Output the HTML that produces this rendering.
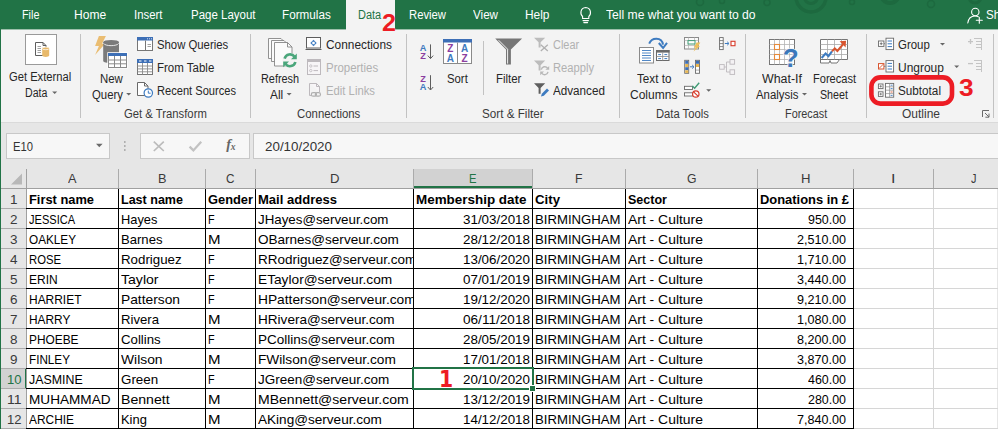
<!DOCTYPE html>
<html lang="en">
<head>
<meta charset="utf-8">
<title>Excel - Data - Subtotal</title>
<style>
html,body{margin:0;padding:0;}
body{width:998px;height:429px;overflow:hidden;position:relative;background:#e6e6e6;font-family:"Liberation Sans",Arial,sans-serif;}
#app{position:absolute;left:0;top:0;width:998px;height:429px;overflow:hidden;background:#e6e6e6;}
.abs{position:absolute;}
.t{position:absolute;white-space:pre;transform-origin:0 0;display:block;}
.clip{position:absolute;overflow:hidden;}
#tabbar{left:0;top:0;width:998px;height:29px;background:#217346;}
#tabactive{left:346px;top:0;width:49px;height:29px;background:#f3f3f3;}
#ribbon{left:0;top:29px;width:998px;height:93px;background:#f3f3f3;}
#ribline{left:0;top:122px;width:998px;height:1px;background:#dadada;}
#leftedge{left:0;top:0;width:1px;height:429px;background:#217346;}
.sep{position:absolute;width:1px;background:#c2c2c2;top:34px;height:84px;}
.box{position:absolute;box-sizing:border-box;border:1px solid #c8c8c8;background:#f7f7f7;}
#grid{left:1px;top:169px;width:996px;height:260px;background:#fff;}
#colhdr{left:1px;top:169px;width:996px;height:19px;background:#e6e6e6;}
#rowhdr{left:1px;top:169px;width:25px;height:260px;background:#e6e6e6;}
.hsep{position:absolute;top:169px;width:1px;height:19px;background:#ababab;}
.vl{position:absolute;width:1px;background:#000;}
.hl{position:absolute;height:1px;background:#000;}
.gl{position:absolute;background:#d6d6d6;}
svg{position:absolute;overflow:visible;}
</style>
</head>
<body>
<div id="app">
<div class="abs" id="tabbar"></div>
<svg width="998" height="29" viewBox="0 0 998 29" style="left:0;top:0">
<g fill="none" stroke="#1d693f" stroke-width="3.5">
<circle cx="811" cy="-3" r="15"/>
<circle cx="811" cy="-3" r="6.5" stroke-width="3"/>
<circle cx="890" cy="-6" r="9" stroke-width="4"/>
<circle cx="975" cy="-3" r="6" stroke-width="3"/>
</g>
<g fill="none" stroke="#1d693f" stroke-width="1.5">
<circle cx="700" cy="2" r="3.5"/>
<circle cx="722" cy="1" r="2.5"/>
<circle cx="767" cy="2.5" r="3"/>
<circle cx="852" cy="2" r="2.5"/>
<circle cx="931" cy="4" r="3.5"/>
</g>
</svg>
<div class="abs" id="tabactive"></div>
<div class="abs" id="ribbon"></div>
<div class="abs" id="ribline"></div>
<div class="abs" style="left:0;top:29px;width:346px;height:1px;background:#9dbfab"></div>
<div class="abs" style="left:395px;top:29px;width:603px;height:1px;background:#9dbfab"></div>

<!-- group separators -->
<div class="sep" style="left:80px"></div>
<div class="sep" style="left:250px"></div>
<div class="sep" style="left:406px"></div>
<div class="sep" style="left:483px;top:41px;height:54px"></div>
<div class="sep" style="left:619px"></div>
<div class="sep" style="left:745px"></div>
<div class="sep" style="left:866px"></div>
<div class="sep" style="left:993px"></div>

<!-- formula bar -->
<div class="box" style="left:6px;top:133px;width:104px;height:26px"></div>
<div class="box" style="left:140px;top:133px;width:110px;height:26px"></div>
<div class="box" style="left:253px;top:133px;width:760px;height:26px"></div>

<!-- grid -->
<div class="abs" id="grid"></div>
<div class="abs" id="colhdr"></div>
<div class="abs" id="rowhdr"></div>
<!-- selected column header E and row header 10 -->
<div class="abs" style="left:414px;top:169px;width:118px;height:18px;background:#d2d2d2"></div>
<div class="abs" style="left:414px;top:186px;width:118px;height:2px;background:#217346"></div>
<div class="abs" style="left:1px;top:369px;width:25px;height:19px;background:#d2d2d2"></div>
<div class="abs" style="left:25px;top:369px;width:2px;height:19px;background:#217346"></div>
<div class="hsep" style="left:26px"></div>
<div class="hsep" style="left:118px"></div>
<div class="hsep" style="left:205px"></div>
<div class="hsep" style="left:255px"></div>
<div class="hsep" style="left:413px"></div>
<div class="hsep" style="left:532px"></div>
<div class="hsep" style="left:625px"></div>
<div class="hsep" style="left:757px"></div>
<div class="hsep" style="left:853px"></div>
<div class="hsep" style="left:933px"></div>
<div class="gl" style="left:1px;top:188px;width:25px;height:1px;background:#ababab"></div>
<div class="gl" style="left:1px;top:208px;width:25px;height:1px;background:#ababab"></div>
<div class="gl" style="left:1px;top:228px;width:25px;height:1px;background:#ababab"></div>
<div class="gl" style="left:1px;top:248px;width:25px;height:1px;background:#ababab"></div>
<div class="gl" style="left:1px;top:268px;width:25px;height:1px;background:#ababab"></div>
<div class="gl" style="left:1px;top:288px;width:25px;height:1px;background:#ababab"></div>
<div class="gl" style="left:1px;top:308px;width:25px;height:1px;background:#ababab"></div>
<div class="gl" style="left:1px;top:328px;width:25px;height:1px;background:#ababab"></div>
<div class="gl" style="left:1px;top:348px;width:25px;height:1px;background:#ababab"></div>
<div class="gl" style="left:1px;top:368px;width:25px;height:1px;background:#ababab"></div>
<div class="gl" style="left:1px;top:388px;width:25px;height:1px;background:#ababab"></div>
<div class="gl" style="left:1px;top:408px;width:25px;height:1px;background:#ababab"></div>
<div class="gl" style="left:1px;top:428px;width:25px;height:1px;background:#ababab"></div>
<div class="gl" style="left:854px;top:188px;width:144px;height:1px"></div>
<div class="gl" style="left:854px;top:208px;width:144px;height:1px"></div>
<div class="gl" style="left:854px;top:228px;width:144px;height:1px"></div>
<div class="gl" style="left:854px;top:248px;width:144px;height:1px"></div>
<div class="gl" style="left:854px;top:268px;width:144px;height:1px"></div>
<div class="gl" style="left:854px;top:288px;width:144px;height:1px"></div>
<div class="gl" style="left:854px;top:308px;width:144px;height:1px"></div>
<div class="gl" style="left:854px;top:328px;width:144px;height:1px"></div>
<div class="gl" style="left:854px;top:348px;width:144px;height:1px"></div>
<div class="gl" style="left:854px;top:368px;width:144px;height:1px"></div>
<div class="gl" style="left:854px;top:388px;width:144px;height:1px"></div>
<div class="gl" style="left:854px;top:408px;width:144px;height:1px"></div>
<div class="gl" style="left:854px;top:428px;width:144px;height:1px"></div>
<div class="gl" style="left:933px;top:189px;width:1px;height:240px"></div>
<div class="gl" style="left:854px;top:188px;width:144px;height:1px;background:#a0a0a0"></div>
<div class="vl" style="left:26px;top:169px;height:260px;background:#a0a0a0"></div>
<div class="vl" style="left:118px;top:188px;height:241px"></div>
<div class="vl" style="left:205px;top:188px;height:241px"></div>
<div class="vl" style="left:255px;top:188px;height:241px"></div>
<div class="vl" style="left:413px;top:188px;height:241px"></div>
<div class="vl" style="left:532px;top:188px;height:241px"></div>
<div class="vl" style="left:625px;top:188px;height:241px"></div>
<div class="vl" style="left:757px;top:188px;height:241px"></div>
<div class="vl" style="left:853px;top:188px;height:241px"></div>
<div class="hl" style="left:1px;top:188px;width:853px;background:#a0a0a0"></div>
<div class="hl" style="left:26px;top:208px;width:828px"></div>
<div class="hl" style="left:26px;top:228px;width:828px"></div>
<div class="hl" style="left:26px;top:248px;width:828px"></div>
<div class="hl" style="left:26px;top:268px;width:828px"></div>
<div class="hl" style="left:26px;top:288px;width:828px"></div>
<div class="hl" style="left:26px;top:308px;width:828px"></div>
<div class="hl" style="left:26px;top:328px;width:828px"></div>
<div class="hl" style="left:26px;top:348px;width:828px"></div>
<div class="hl" style="left:26px;top:368px;width:828px"></div>
<div class="hl" style="left:26px;top:388px;width:828px"></div>
<div class="hl" style="left:26px;top:408px;width:828px"></div>
<div class="hl" style="left:26px;top:428px;width:828px"></div>
<!-- selection -->
<div class="abs" style="left:412px;top:367px;width:122px;height:23px;box-sizing:border-box;border:2px solid #217346"></div>
<div class="abs" style="left:529px;top:385px;width:7px;height:7px;background:#fff"></div>
<div class="abs" style="left:530px;top:386px;width:5px;height:5px;background:#217346"></div>

<svg width="998" height="429" viewBox="0 0 998 429" style="left:0;top:0" font-family="Liberation Sans, Arial, sans-serif">
<!-- ===== Tab bar: bulb + share ===== -->
<g fill="none" stroke="#fff" stroke-width="1.1" stroke-linecap="round">
  <path d="M582.6 16.5 C580 14.5 580 8 585.7 7.5 C591.4 8 591.4 14.5 588.8 16.5 L588.8 18.5 L582.6 18.5 Z"/>
  <path d="M583 20.6 H588.4 M583.8 22.6 H587.6"/>
  <circle cx="975.3" cy="12" r="3.7"/>
  <path d="M967.8 23 C968.5 18 971.5 16 975 16 C976.3 16 977.4 16.3 978.3 16.8"/>
  <path d="M979.3 17.2 V23.2 M976.3 20.2 H982.3"/>
</g>

<!-- ===== Get External Data ===== -->
<rect x="25.5" y="34.5" width="31" height="30" fill="#fff" stroke="#9a9a9a"/>
<path d="M35.5 42.5 H43 L46 45.5 V55.5 H35.5 Z" fill="#fff" stroke="#5e5e5e"/>
<path d="M43 42.5 V45.5 H46" fill="none" stroke="#5e5e5e"/>
<path d="M37.5 46.5 H41 M37.5 48.5 H41 M37.5 50.5 H41 M37.5 52.5 H41" stroke="#8a8a8a" stroke-width="0.8"/>
<path d="M42.2 48.5 V55.6 C42.2 57.4 49.2 57.4 49.2 55.6 V48.5 Z" fill="#e8b96a"/>
<ellipse cx="45.7" cy="48.4" rx="3.5" ry="1.3" fill="#e8b96a" stroke="#fff" stroke-width="0.7"/>
<path d="M52.2 91.4 H57.2 L54.7 94 Z" fill="#666"/>

<!-- ===== New Query ===== -->
<polygon points="98.9,35.9 105.9,35.9 102,43.7 105,43.7 95.1,54.9 98.9,46 95.1,46" fill="#eabd72"/>
<path d="M103.2 42.3 V61 C103.2 63.6 119 63.6 119 61 V42.3 Z" fill="#7a7a7a"/>
<ellipse cx="111.1" cy="42.3" rx="7.9" ry="2.4" fill="#7a7a7a"/><path d="M103.6 43.4 C105 46.4 117.2 46.4 118.6 43.4" fill="none" stroke="#f3f3f3" stroke-width="0.9"/>
<rect x="107.3" y="52.2" width="20.4" height="16.3" fill="#fff"/>
<rect x="108.5" y="53.5" width="18" height="14" fill="#fff" stroke="#8a8a8a"/>
<rect x="108" y="53" width="19" height="3" fill="#3d6fb6"/>
<path d="M108.5 60 H126.5 M108.5 63.8 H126.5 M114.5 56 V67.5 M120.5 56 V67.5" stroke="#8a8a8a" fill="none"/>
<path d="M126.2 93 H131.2 L128.7 95.6 Z" fill="#666"/>

<!-- Show Queries -->
<rect x="137.5" y="37.5" width="15" height="13" fill="#fff" stroke="#767676"/>
<rect x="137" y="37" width="16" height="3.5" fill="#3d6fb6"/>
<path d="M145.5 40.5 V50.5" stroke="#767676"/>
<path d="M147.5 44.5 H151 M147.5 46.5 H151" stroke="#8a8a8a" stroke-width="0.8"/>
<path d="M147 38.8 H148 M149 38.8 H150 M151 38.8 H152" stroke="#fff" stroke-width="0.8"/>
<!-- From Table -->
<rect x="137.5" y="59.5" width="15" height="15" fill="#fff" stroke="#767676"/>
<rect x="137" y="59" width="16" height="4" fill="#3d6fb6"/>
<path d="M139 61 H141.5 M144 61 H146.5 M149 61 H151.5" stroke="#fff" stroke-width="1"/>
<path d="M137.5 66 H152.5 M137.5 68.9 H152.5 M137.5 71.8 H152.5 M142.5 63 V74.5 M147.5 63 V74.5" stroke="#8a8a8a" stroke-width="0.9" fill="none"/>
<!-- Recent Sources -->
<path d="M137.5 82.5 H144.5 L148 86 V95.5 H137.5 Z" fill="#fff" stroke="#6a6a6a"/>
<path d="M144.5 82.5 V86 H148" fill="none" stroke="#6a6a6a"/>
<circle cx="148.3" cy="93" r="4.2" fill="#fff" stroke="#3d7bc0" stroke-width="1.2"/>
<path d="M148.3 90.6 V93.2 H150.6" fill="none" stroke="#3d7bc0" stroke-width="1"/>

<!-- ===== Refresh All ===== -->
<g fill="#fbfbfb" stroke="#868686" stroke-width="0.9">
<path d="M268.5 38.5 H281 L285.5 43 V58.5 H268.5 Z"/>
<path d="M271.5 40.5 H284 L288.5 45 V61.5 H271.5 Z"/>
<path d="M274.5 42.5 H287.5 L292 47 V66 H274.5 Z"/>
<path d="M287.5 42.5 V47 H292" fill="none"/>
</g>
<circle cx="290" cy="60.3" r="7.6" fill="#f3f3f3"/>
<g fill="none" stroke="#4aa67b" stroke-width="2.6">
<path d="M284.6 58.6 A5.6 5.6 0 0 1 294.6 56.8"/>
<path d="M295.4 62 A5.6 5.6 0 0 1 285.4 63.8"/>
</g>
<path d="M296.8 53.4 V59.2 H291 Z" fill="#4aa67b"/>
<path d="M283.2 67.2 V61.4 H289 Z" fill="#4aa67b"/>
<path d="M286.6 93 H291.6 L289.1 95.6 Z" fill="#666"/>

<!-- Connections -->
<rect x="306.5" y="37.5" width="14" height="10.5" fill="#fff" stroke="#5e5e5e"/>
<path d="M305.5 49.5 H321.5" stroke="#5e5e5e"/>
<path d="M313.5 39.8 L316.7 43 L313.5 46.2 L310.3 43 Z" fill="#3d7bc0"/>
<rect x="312.3" y="41.8" width="2.4" height="2.4" fill="#fff"/>
<!-- Properties (disabled) -->
<rect x="307.5" y="59.5" width="13" height="15" fill="#f7f5f7" stroke="#bdb9bd"/>
<rect x="307" y="59" width="14" height="3" fill="#bdb9bd"/>
<circle cx="310.8" cy="66" r="1.2" fill="none" stroke="#bdb9bd" stroke-width="0.8"/>
<circle cx="310.8" cy="70.6" r="1.2" fill="none" stroke="#bdb9bd" stroke-width="0.8"/>
<path d="M313.5 66 H318 M313.5 70.6 H318" stroke="#bdb9bd"/>
<!-- Edit Links (disabled) -->
<path d="M309.5 83.5 H316.5 L319.5 86.5 V92 M309.5 83.5 V95.5 H311" fill="#f7f5f7" stroke="#bdb9bd"/>
<path d="M316.5 83.5 V86.5 H319.5" fill="none" stroke="#bdb9bd"/>
<g fill="none" stroke="#b0b0b0" stroke-width="1.2">
<rect x="311.3" y="92.6" width="5.2" height="3.6" rx="1.8"/>
<rect x="315.3" y="92.6" width="5.2" height="3.6" rx="1.8"/>
</g>

<!-- ===== Sort & Filter ===== -->
<g font-weight="bold" font-size="9.2" text-anchor="middle">
<text x="423" y="50.6" fill="#3e7ac0">A</text>
<text x="423" y="58.8" fill="#8b3fa0">Z</text>
<text x="423" y="81.6" fill="#8b3fa0">Z</text>
<text x="423" y="90" fill="#3e7ac0">A</text>
</g>
<g fill="none" stroke="#5e5e5e" stroke-width="1">
<path d="M430.5 44.4 V58.4 M427.8 55.6 L430.5 58.6 L433.2 55.6"/>
<path d="M430.5 75.2 V89.8 M427.8 87 L430.5 90 L433.2 87"/>
</g>
<rect x="443.5" y="39.5" width="28" height="24" fill="#fff" stroke="#8a8a8a"/>
<rect x="443" y="39" width="29" height="3.5" fill="#3d6fb6"/>
<path d="M457.5 42.5 V63.5" stroke="#8a8a8a"/>
<g font-size="10" font-weight="bold" text-anchor="middle">
<text x="450.4" y="52.2" fill="#8b3fa0">Z</text>
<text x="450.4" y="61.8" fill="#3e7ac0">A</text>
<text x="464.6" y="52.2" fill="#3e7ac0">A</text>
<text x="464.6" y="61.8" fill="#8b3fa0">Z</text>
</g>
<!-- Filter -->
<path d="M495.2 38.5 H522.1 L510.9 49.5 V64.6 H506 V49.5 Z" fill="#767676"/>
<path d="M498.6 40.2 L507.6 49.2 V63.6" fill="none" stroke="#fff" stroke-width="0.9"/>
<!-- Clear (disabled) -->
<path d="M534 37.7 H545.2 L540.6 42.3 V47.4 H538.6 V42.3 Z" fill="#bcbcbc"/>
<path d="M540.8 44.8 L547.8 51 M547.8 44.8 L540.8 51" stroke="#b0b0b0" stroke-width="1.3"/>
<!-- Reapply (disabled) -->
<path d="M534 60.6 H545.2 L540.6 65.2 V70.4 H538.6 V65.2 Z" fill="#bcbcbc"/>
<g fill="none" stroke="#b8b8b8" stroke-width="1.4">
<path d="M541.3 69.6 A3.5 3.5 0 0 1 547.6 68.2"/>
<path d="M548 71.8 A3.5 3.5 0 0 1 541.7 73.2"/>
</g>
<path d="M549.2 66 V69.8 H545.4 Z" fill="#b8b8b8"/>
<path d="M540.2 75.2 V71.4 H544 Z" fill="#b8b8b8"/>
<!-- Advanced -->
<path d="M534 83.3 H545.2 L540.6 88 V93.7 H538.6 V88 Z" fill="#5e5e5e"/>
<path d="M541 96.6 L541.8 93.8 L547 88.6 L549 90.6 L543.8 95.8 Z" fill="#3d7bc0"/>

<!-- ===== Data Tools ===== -->
<!-- Text to Columns -->
<rect x="639.5" y="47.5" width="14" height="15.5" fill="#fff" stroke="#8a8a8a"/>
<path d="M642 50.5 H651 M642 53 H651 M642 55.5 H651 M642 58 H651 M642 60.5 H651" stroke="#3d7bc0" stroke-width="0.9"/>
<rect x="656.5" y="50.5" width="12.5" height="10" fill="#fff" stroke="#6a6a6a"/>
<rect x="656" y="50" width="13.5" height="2.6" fill="#6a6a6a"/>
<path d="M662.7 52.5 V60.5 M656.5 56.5 H669" stroke="#8a8a8a" stroke-width="0.8"/>
<path d="M658.2 54.6 H661 M664.4 54.6 H667.2 M658.2 58.6 H661 M664.4 58.6 H667.2" stroke="#3d7bc0" stroke-width="1"/>
<path d="M649.2 43.6 C651.5 37.2 661.8 36.6 663 44.6" fill="none" stroke="#3d7bc0" stroke-width="2"/>
<path d="M658.8 43 L663.1 48 L667 42.8" fill="none" stroke="#3d7bc0" stroke-width="2"/>
<!-- Flash fill -->
<rect x="684.5" y="37.5" width="14" height="11.5" fill="#fafafa" stroke="#8a8a8a"/>
<path d="M684.5 40.5 H698.5 M684.5 45.5 H698.5 M688.5 37.5 V49 M694.5 37.5 V49" stroke="#b0b0b0" stroke-width="0.7"/>
<rect x="688" y="40.6" width="7" height="3.4" fill="#fff" stroke="#3f9b75" stroke-width="1"/>
<polygon points="696.5,42.6 700.3,42.6 698.2,46 700,46 693.6,51.6 695.6,47.4 693.8,47.4" fill="#edc05e"/>
<!-- Remove duplicates -->
<rect x="684.7" y="60.3" width="4" height="13" fill="#fff" stroke="#6a6a6a" stroke-width="0.9"/>
<rect x="685.2" y="60.8" width="3" height="3" fill="#3d6fb6"/><rect x="685.2" y="64" width="3" height="3" fill="#e8b651"/><rect x="685.2" y="67.2" width="3" height="3" fill="#3d6fb6"/><rect x="685.2" y="70.3" width="3" height="2.6" fill="#e8b651"/>
<rect x="695.5" y="60.3" width="4" height="13" fill="#fff" stroke="#6a6a6a" stroke-width="0.9"/>
<rect x="696" y="60.8" width="3" height="3" fill="#3d6fb6"/><rect x="696" y="64" width="3" height="3" fill="#e8b651"/>
<path d="M696 70.1 H699" stroke="#8a8a8a" stroke-width="0.7"/>
<path d="M690 66.8 H693.6 M692.2 65 L694 66.8 L692.2 68.6" fill="none" stroke="#3d7bc0" stroke-width="1"/>
<!-- Data validation -->
<rect x="684.5" y="86.3" width="8" height="3.2" fill="#fff" stroke="#6a6a6a" stroke-width="0.9"/>
<rect x="684.5" y="92.8" width="8" height="3.2" fill="#fff" stroke="#6a6a6a" stroke-width="0.9"/>
<path d="M692.4 86 L694.6 88.2 L699.2 82.8" fill="none" stroke="#3f9b75" stroke-width="1.4"/>
<circle cx="695.8" cy="94" r="3.2" fill="#fff" stroke="#d83b2a" stroke-width="1.2"/>
<path d="M693.6 91.8 L698 96.2" stroke="#d83b2a" stroke-width="1.2"/>
<path d="M706.2 89.2 H711.2 L708.7 91.8 Z" fill="#666"/>
<!-- Consolidate -->
<rect x="719.6" y="37.6" width="3.6" height="12" fill="#fff" stroke="#6a6a6a" stroke-width="0.9"/>
<path d="M719.6 40.6 H723.2 M719.6 43.6 H723.2 M719.6 46.6 H723.2" stroke="#6a6a6a" stroke-width="0.8"/>
<path d="M724.8 43.5 H728.6 M727.2 41.8 L729 43.5 L727.2 45.2" fill="none" stroke="#3d7bc0" stroke-width="1"/>
<rect x="731" y="41.3" width="4" height="4.4" fill="#fff" stroke="#d83b2a" stroke-width="1.1"/>
<!-- Relationships (disabled) -->
<g fill="#f4f2f4" stroke="#bdb9bd" stroke-width="0.9">
<path d="M724 67 H726.5 V62 H730 M726.5 67 V72 H730" fill="none"/>
<rect x="719.6" y="64.6" width="4.6" height="4.6"/>
<rect x="730" y="59.6" width="4.6" height="4.6"/>
<rect x="730" y="69.8" width="4.6" height="4.6"/>
</g>

<!-- ===== Forecast ===== -->
<!-- What-If -->
<rect x="769.5" y="39.5" width="25" height="25" fill="#fff" stroke="#767676"/>
<path d="M774.5 39.5 V64.5 M779.5 39.5 V64.5 M784.5 39.5 V64.5 M789.5 39.5 V64.5 M769.5 44.5 H794.5 M769.5 49.5 H794.5 M769.5 54.5 H794.5 M769.5 59.5 H794.5" stroke="#b4b4b4" stroke-width="0.8"/>
<rect x="774.5" y="44.5" width="5" height="5" fill="#fff" stroke="#e58a3c" stroke-width="1.1"/>
<rect x="774.5" y="54.5" width="5" height="5" fill="#fff" stroke="#e58a3c" stroke-width="1.1"/>
<text x="790.8" y="67.2" font-size="26" font-weight="bold" fill="#3b78bb" text-anchor="middle" stroke="#f3f3f3" stroke-width="1.6" paint-order="stroke">?</text>
<path d="M802 93 H807 L804.5 95.6 Z" fill="#666"/>
<!-- Forecast sheet -->
<path d="M820.5 39.5 H847.5 V59.5 H839.5 L837 63 H831 L830 60.5 L829 63 H820.5 Z" fill="#fff" stroke="#767676"/>
<path d="M820.5 59.5 H839.5" stroke="#767676"/>
<path d="M827.5 39.5 V59.5 M834.5 39.5 V59.5 M841.5 39.5 V59.5 M820.5 44.5 H847.5 M820.5 49.5 H847.5 M820.5 54.5 H847.5" stroke="#a8a8a8" stroke-width="0.8"/>
<path d="M821.6 58 L825.6 53.6 L828.4 56.2 L832 51.4" fill="none" stroke="#3d7bc0" stroke-width="2.1"/>
<path d="M832 51.4 L834.8 48.4 L837.4 51 L843.6 43.6" fill="none" stroke="#d8552f" stroke-width="2.1"/>
<path d="M839.6 41.2 L846 40.8 L845.6 47.4 Z" fill="#d8552f"/>

<!-- ===== Outline ===== -->
<!-- Group -->
<rect x="878.5" y="41" width="5.4" height="5.4" fill="#fff" stroke="#6a6a6a" stroke-width="0.9"/>
<path d="M879.8 43.7 H882.6 M881.2 42.3 V45.1" stroke="#6a6a6a" stroke-width="0.9"/>
<path d="M884 43.7 H885.5" stroke="#6a6a6a" stroke-width="0.8" stroke-dasharray="1 0.6"/>
<rect x="886" y="38.2" width="7.6" height="11.4" fill="#fff" stroke="#6a6a6a" stroke-width="0.9"/>
<path d="M887.6 41 H892 M887.6 43.8 H892 M887.6 46.6 H892" stroke="#3d7bc0" stroke-width="1"/>
<path d="M940 43 H945 L942.5 45.6 Z" fill="#666"/>
<!-- Ungroup -->
<rect x="878.5" y="63.6" width="5.4" height="5.4" fill="#fff" stroke="#d8552f" stroke-width="1"/>
<path d="M879 68.5 L883.4 64.1" stroke="#d8552f" stroke-width="0.9"/>
<path d="M884 66.3 H885.5" stroke="#6a6a6a" stroke-width="0.8"/>
<rect x="886" y="60.6" width="7.6" height="11.4" fill="#fff" stroke="#6a6a6a" stroke-width="0.9"/>
<path d="M887.6 63.4 H892 M887.6 66.2 H892 M887.6 69 H892" stroke="#3d7bc0" stroke-width="1"/>
<path d="M954.2 65.5 H959.2 L956.7 68.1 Z" fill="#666"/>
<!-- Subtotal -->
<rect x="878.4" y="84" width="4.6" height="4.6" fill="#fff" stroke="#6a6a6a" stroke-width="0.9"/>
<rect x="878.4" y="91.8" width="4.6" height="4.6" fill="#fff" stroke="#6a6a6a" stroke-width="0.9"/>
<path d="M879.5 86.3 H881.9 M880.7 85.1 V87.5 M879.5 94.1 H881.9 M880.7 92.9 V95.3" stroke="#6a6a6a" stroke-width="0.8"/>
<rect x="885.5" y="83.4" width="8.2" height="13.8" fill="#fff" stroke="#6a6a6a" stroke-width="0.9"/>
<path d="M889.6 83.4 V97.2 M885.5 86.8 H893.7 M885.5 90.2 H893.7 M885.5 93.6 H893.7" stroke="#8a8a8a" stroke-width="0.7"/>
<path d="M890.6 85.2 H892.6 M890.6 88.6 H892.6 M890.6 95.4 H892.6" stroke="#3d7bc0" stroke-width="0.9"/>
<path d="M890.6 92 H892.6" stroke="#d8552f" stroke-width="0.9"/>
<!-- show/hide detail (disabled) -->
<g stroke="#c4c4c4" stroke-width="1" fill="none">
<path d="M974 38.5 H982 M976 41.5 H982 M976 44.5 H982 M976 47.5 H982 M981.5 38 V50"/>
<path d="M968 41.6 H973 M970.5 39.1 V44.1" stroke-width="1.3"/>
<path d="M974 60.5 H982 M976 63.5 H982 M976 66.5 H982 M976 69.5 H982 M981.5 60 V72"/>
<path d="M968 63.6 H973" stroke-width="1.3"/>
</g>
<!-- dialog launcher -->
<path d="M982.5 117 V110.5 H989" fill="none" stroke="#6a6a6a"/>
<path d="M985 113 L989 117 M989 113.6 V117.2 H985.4" fill="none" stroke="#6a6a6a"/>
<!-- red highlight -->
<rect x="871.4" y="77.4" width="80.6" height="26.2" rx="9" ry="9" fill="none" stroke="#ed1c24" stroke-width="4.6"/>

<!-- ===== Formula bar icons ===== -->
<path d="M96 143.8 H102.6 L99.3 147.2 Z" fill="#6a6a6a"/>
<path d="M124.8 141.3 V142.8 M124.8 145.3 V146.8 M124.8 149.3 V150.8" stroke="#9a9a9a" stroke-width="1.5"/>
<path d="M153.8 141.6 L163.8 151 M163.8 141.6 L153.8 151" stroke="#bcbcbc" stroke-width="1.7"/>
<path d="M189.6 146.6 L193.4 150.4 L201.2 141.8" fill="none" stroke="#c2c2c2" stroke-width="2.3"/>
<text x="226.2" y="149.4" font-family="Liberation Serif, serif" font-style="italic" font-weight="bold" font-size="14.5" fill="#666">f</text>
<text x="230.8" y="149.8" font-family="Liberation Serif, serif" font-style="italic" font-weight="bold" font-size="9.5" fill="#666">x</text>
<!-- select all triangle -->
<path d="M22 173.6 V184.6 H11 Z" fill="#b8b8b8"/>
</svg>

<span class="t" style="left:21.6px;top:7.5px;font-size:12px;line-height:15px;color:#ffffff;transform:scaleX(0.8995);">File</span>
<span class="t" style="left:74.4px;top:7.5px;font-size:12px;line-height:15px;color:#ffffff;transform:scaleX(1.0058);">Home</span>
<span class="t" style="left:134.0px;top:7.5px;font-size:12px;line-height:15px;color:#ffffff;transform:scaleX(0.9462);">Insert</span>
<span class="t" style="left:190.5px;top:7.5px;font-size:12px;line-height:15px;color:#ffffff;transform:scaleX(0.9571);">Page Layout</span>
<span class="t" style="left:282.2px;top:7.5px;font-size:12px;line-height:15px;color:#ffffff;transform:scaleX(0.9757);">Formulas</span>
<span class="t" style="left:358.2px;top:7.5px;font-size:12px;line-height:15px;color:#217346;transform:scaleX(0.9148);">Data</span>
<span class="t" style="left:409.0px;top:7.5px;font-size:12px;line-height:15px;color:#ffffff;transform:scaleX(0.9401);">Review</span>
<span class="t" style="left:473.0px;top:7.5px;font-size:12px;line-height:15px;color:#ffffff;transform:scaleX(0.9691);">View</span>
<span class="t" style="left:525.2px;top:7.5px;font-size:12px;line-height:15px;color:#ffffff;transform:scaleX(0.9924);">Help</span>
<span class="t" style="left:605.6px;top:7.5px;font-size:12px;line-height:15px;color:#ffffff;transform:scaleX(1.0103);">Tell me what you want to do</span>
<span class="t" style="left:986.0px;top:7.5px;font-size:12px;line-height:15px;color:#ffffff;transform:scaleX(0.9678);">Share</span>
<span class="t" style="left:9.4px;top:69.5px;font-size:12px;line-height:15px;color:#262626;transform:scaleX(0.9325);">Get External</span>
<span class="t" style="left:25.3px;top:85.5px;font-size:12px;line-height:15px;color:#262626;transform:scaleX(0.8833);">Data</span>
<span class="t" style="left:99.7px;top:71.5px;font-size:12px;line-height:15px;color:#262626;transform:scaleX(0.9494);">New</span>
<span class="t" style="left:91.6px;top:87.5px;font-size:12px;line-height:15px;color:#262626;transform:scaleX(0.9453);">Query</span>
<span class="t" style="left:156.5px;top:37.5px;font-size:12px;line-height:15px;color:#262626;transform:scaleX(0.9446);">Show Queries</span>
<span class="t" style="left:156.5px;top:60.5px;font-size:12px;line-height:15px;color:#262626;transform:scaleX(0.9580);">From Table</span>
<span class="t" style="left:156.5px;top:83.5px;font-size:12px;line-height:15px;color:#262626;transform:scaleX(0.9252);">Recent Sources</span>
<span class="t" style="left:123.6px;top:106.5px;font-size:12px;line-height:15px;color:#3a3a3a;transform:scaleX(0.9406);">Get &amp; Transform</span>
<span class="t" style="left:261.3px;top:71.5px;font-size:12px;line-height:15px;color:#262626;transform:scaleX(0.9065);">Refresh</span>
<span class="t" style="left:270.3px;top:87.5px;font-size:12px;line-height:15px;color:#262626;transform:scaleX(0.9892);">All</span>
<span class="t" style="left:325.5px;top:37.5px;font-size:12px;line-height:15px;color:#262626;transform:scaleX(0.9892);">Connections</span>
<span class="t" style="left:325.5px;top:60.5px;font-size:12px;line-height:15px;color:#b1b1b1;transform:scaleX(0.9542);">Properties</span>
<span class="t" style="left:325.5px;top:83.5px;font-size:12px;line-height:15px;color:#b1b1b1;transform:scaleX(0.9417);">Edit Links</span>
<span class="t" style="left:296.9px;top:106.5px;font-size:12px;line-height:15px;color:#3a3a3a;transform:scaleX(0.9488);">Connections</span>
<span class="t" style="left:447.2px;top:71.5px;font-size:12px;line-height:15px;color:#262626;transform:scaleX(0.9448);">Sort</span>
<span class="t" style="left:496.3px;top:71.5px;font-size:12px;line-height:15px;color:#262626;transform:scaleX(0.9523);">Filter</span>
<span class="t" style="left:552.5px;top:37.5px;font-size:12px;line-height:15px;color:#b1b1b1;transform:scaleX(0.9098);">Clear</span>
<span class="t" style="left:552.5px;top:60.5px;font-size:12px;line-height:15px;color:#b1b1b1;transform:scaleX(0.9312);">Reapply</span>
<span class="t" style="left:552.5px;top:83.5px;font-size:12px;line-height:15px;color:#262626;transform:scaleX(0.9724);">Advanced</span>
<span class="t" style="left:482.3px;top:106.5px;font-size:12px;line-height:15px;color:#3a3a3a;transform:scaleX(0.9738);">Sort &amp; Filter</span>
<span class="t" style="left:637.3px;top:71.5px;font-size:12px;line-height:15px;color:#262626;transform:scaleX(0.9729);">Text to</span>
<span class="t" style="left:630.3px;top:87.5px;font-size:12px;line-height:15px;color:#262626;transform:scaleX(1.0009);">Columns</span>
<span class="t" style="left:655.6px;top:106.5px;font-size:12px;line-height:15px;color:#3a3a3a;transform:scaleX(0.9348);">Data Tools</span>
<span class="t" style="left:762.3px;top:71.5px;font-size:12px;line-height:15px;color:#262626;transform:scaleX(1.0318);">What-If</span>
<span class="t" style="left:756.4px;top:87.5px;font-size:12px;line-height:15px;color:#262626;transform:scaleX(0.9488);">Analysis</span>
<span class="t" style="left:812.6px;top:71.5px;font-size:12px;line-height:15px;color:#262626;transform:scaleX(0.9210);">Forecast</span>
<span class="t" style="left:820.4px;top:87.5px;font-size:12px;line-height:15px;color:#262626;transform:scaleX(0.8897);">Sheet</span>
<span class="t" style="left:784.5px;top:106.5px;font-size:12px;line-height:15px;color:#3a3a3a;transform:scaleX(0.9039);">Forecast</span>
<span class="t" style="left:897.8px;top:37.5px;font-size:12px;line-height:15px;color:#262626;transform:scaleX(0.9533);">Group</span>
<span class="t" style="left:897.8px;top:60.5px;font-size:12px;line-height:15px;color:#262626;transform:scaleX(0.9971);">Ungroup</span>
<span class="t" style="left:897.8px;top:83.5px;font-size:12px;line-height:15px;color:#262626;transform:scaleX(0.9762);">Subtotal</span>
<span class="t" style="left:902.3px;top:106.5px;font-size:12px;line-height:15px;color:#3a3a3a;transform:scaleX(0.9992);">Outline</span>
<span class="t" style="left:382.2px;top:8.2px;font-size:24px;line-height:30px;color:#ed1c24;transform:scaleX(1.0480);font-weight:bold;">2</span>
<span class="t" style="left:958.8px;top:73.5px;font-size:23.5px;line-height:29px;color:#ed1c24;transform:scaleX(1.1164);font-weight:bold;">3</span>
<span class="t" style="left:438.6px;top:364.0px;font-size:23.3px;line-height:29px;color:#ed1c24;transform:scaleX(0.8755);font-weight:bold;font-family:'DejaVu Sans',sans-serif;">1</span>
<span class="t" style="left:13.0px;top:138.5px;font-size:13px;line-height:16px;color:#333333;transform:scaleX(0.8643);">E10</span>
<span class="t" style="left:265.4px;top:139.0px;font-size:13px;line-height:16px;color:#333333;transform:scaleX(1.0295);">20/10/2020</span>
<span class="t" style="left:68.2px;top:170.5px;font-size:13px;line-height:16px;color:#3a3a3a;transform:scaleX(0.9802);">A</span>
<span class="t" style="left:157.8px;top:170.5px;font-size:13px;line-height:16px;color:#3a3a3a;transform:scaleX(0.9802);">B</span>
<span class="t" style="left:226.2px;top:170.5px;font-size:13px;line-height:16px;color:#3a3a3a;transform:scaleX(0.9052);">C</span>
<span class="t" style="left:329.8px;top:170.5px;font-size:13px;line-height:16px;color:#3a3a3a;transform:scaleX(1.0116);">D</span>
<span class="t" style="left:469.2px;top:170.5px;font-size:13px;line-height:16px;color:#217346;transform:scaleX(0.8649);">E</span>
<span class="t" style="left:575.2px;top:170.5px;font-size:13px;line-height:16px;color:#3a3a3a;transform:scaleX(0.9430);">F</span>
<span class="t" style="left:686.8px;top:170.5px;font-size:13px;line-height:16px;color:#3a3a3a;transform:scaleX(0.9383);">G</span>
<span class="t" style="left:800.8px;top:170.5px;font-size:13px;line-height:16px;color:#3a3a3a;transform:scaleX(1.0116);">H</span>
<span class="t" style="left:891.2px;top:170.5px;font-size:13px;line-height:16px;color:#3a3a3a;transform:scaleX(1.2414);">I</span>
<span class="t" style="left:970.8px;top:170.5px;font-size:13px;line-height:16px;color:#3a3a3a;transform:scaleX(0.8462);">J</span>
<span class="t" style="left:10.2px;top:191.5px;font-size:13px;line-height:16px;color:#3a3a3a;transform:scaleX(1.0367);">1</span>
<span class="t" style="left:28.5px;top:191.5px;font-size:13px;line-height:16px;color:#000;transform:scaleX(0.9886);font-weight:bold;">First name</span>
<span class="t" style="left:120.5px;top:191.5px;font-size:13px;line-height:16px;color:#000;transform:scaleX(0.9640);font-weight:bold;">Last name</span>
<div class="clip" style="left:207.5px;top:191.5px;width:47.5px;height:16px"><span class="t" style="left:0;top:0;font-size:13px;line-height:16px;color:#000;transform:scaleX(0.9887);font-weight:bold;">Gender</span></div>
<span class="t" style="left:257.5px;top:191.5px;font-size:13px;line-height:16px;color:#000;transform:scaleX(1.0030);font-weight:bold;">Mail address</span>
<span class="t" style="left:415.5px;top:191.5px;font-size:13px;line-height:16px;color:#000;transform:scaleX(1.0335);font-weight:bold;">Membership date</span>
<span class="t" style="left:534.5px;top:191.5px;font-size:13px;line-height:16px;color:#000;transform:scaleX(1.0178);font-weight:bold;">City</span>
<span class="t" style="left:627.5px;top:191.5px;font-size:13px;line-height:16px;color:#000;transform:scaleX(0.9637);font-weight:bold;">Sector</span>
<span class="t" style="left:759.5px;top:191.5px;font-size:13px;line-height:16px;color:#000;transform:scaleX(0.9937);font-weight:bold;">Donations in £</span>
<span class="t" style="left:10.2px;top:211.5px;font-size:13px;line-height:16px;color:#3a3a3a;transform:scaleX(1.0367);">2</span>
<span class="t" style="left:28.5px;top:211.5px;font-size:13px;line-height:16px;color:#000;transform:scaleX(0.8498);">JESSICA</span>
<span class="t" style="left:120.5px;top:211.5px;font-size:13px;line-height:16px;color:#000;transform:scaleX(0.9862);">Hayes</span>
<span class="t" style="left:207.5px;top:211.5px;font-size:13px;line-height:16px;color:#000;transform:scaleX(0.8289);">F</span>
<span class="t" style="left:257.5px;top:211.5px;font-size:13px;line-height:16px;color:#000;transform:scaleX(1.0245);">JHayes@serveur.com</span>
<span class="t" style="left:462.5px;top:211.5px;font-size:13px;line-height:16px;color:#000;transform:scaleX(1.0295);">31/03/2018</span>
<span class="t" style="left:534.5px;top:211.5px;font-size:13px;line-height:16px;color:#000;transform:scaleX(1.0118);">BIRMINGHAM</span>
<span class="t" style="left:627.5px;top:211.5px;font-size:13px;line-height:16px;color:#000;transform:scaleX(1.0692);">Art - Culture</span>
<span class="t" style="left:808.0px;top:211.5px;font-size:13px;line-height:16px;color:#000;transform:scaleX(0.9556);">950.00</span>
<span class="t" style="left:10.2px;top:231.5px;font-size:13px;line-height:16px;color:#3a3a3a;transform:scaleX(1.0367);">3</span>
<span class="t" style="left:28.5px;top:231.5px;font-size:13px;line-height:16px;color:#000;transform:scaleX(0.9041);">OAKLEY</span>
<span class="t" style="left:120.5px;top:231.5px;font-size:13px;line-height:16px;color:#000;transform:scaleX(1.0068);">Barnes</span>
<span class="t" style="left:207.5px;top:231.5px;font-size:13px;line-height:16px;color:#000;transform:scaleX(1.1550);">M</span>
<span class="t" style="left:257.5px;top:231.5px;font-size:13px;line-height:16px;color:#000;transform:scaleX(1.0402);">OBarnes@serveur.com</span>
<span class="t" style="left:462.5px;top:231.5px;font-size:13px;line-height:16px;color:#000;transform:scaleX(1.0295);">28/12/2018</span>
<span class="t" style="left:534.5px;top:231.5px;font-size:13px;line-height:16px;color:#000;transform:scaleX(1.0118);">BIRMINGHAM</span>
<span class="t" style="left:627.5px;top:231.5px;font-size:13px;line-height:16px;color:#000;transform:scaleX(1.0692);">Art - Culture</span>
<span class="t" style="left:797.0px;top:231.5px;font-size:13px;line-height:16px;color:#000;transform:scaleX(0.9682);">2,510.00</span>
<span class="t" style="left:10.2px;top:251.5px;font-size:13px;line-height:16px;color:#3a3a3a;transform:scaleX(1.0367);">4</span>
<span class="t" style="left:28.5px;top:251.5px;font-size:13px;line-height:16px;color:#000;transform:scaleX(0.8683);">ROSE</span>
<span class="t" style="left:120.5px;top:251.5px;font-size:13px;line-height:16px;color:#000;transform:scaleX(1.0232);">Rodriguez</span>
<span class="t" style="left:207.5px;top:251.5px;font-size:13px;line-height:16px;color:#000;transform:scaleX(0.8289);">F</span>
<div class="clip" style="left:257.5px;top:251.5px;width:155.5px;height:16px"><span class="t" style="left:0;top:0;font-size:13px;line-height:16px;color:#000;transform:scaleX(1.0358);">RRodriguez@serveur.com</span></div>
<span class="t" style="left:462.5px;top:251.5px;font-size:13px;line-height:16px;color:#000;transform:scaleX(1.0295);">13/06/2020</span>
<span class="t" style="left:534.5px;top:251.5px;font-size:13px;line-height:16px;color:#000;transform:scaleX(1.0118);">BIRMINGHAM</span>
<span class="t" style="left:627.5px;top:251.5px;font-size:13px;line-height:16px;color:#000;transform:scaleX(1.0692);">Art - Culture</span>
<span class="t" style="left:797.0px;top:251.5px;font-size:13px;line-height:16px;color:#000;transform:scaleX(0.9682);">1,710.00</span>
<span class="t" style="left:10.2px;top:271.5px;font-size:13px;line-height:16px;color:#3a3a3a;transform:scaleX(1.0367);">5</span>
<span class="t" style="left:28.5px;top:271.5px;font-size:13px;line-height:16px;color:#000;transform:scaleX(0.9217);">ERIN</span>
<span class="t" style="left:120.5px;top:271.5px;font-size:13px;line-height:16px;color:#000;transform:scaleX(1.0830);">Taylor</span>
<span class="t" style="left:207.5px;top:271.5px;font-size:13px;line-height:16px;color:#000;transform:scaleX(0.8289);">F</span>
<span class="t" style="left:257.5px;top:271.5px;font-size:13px;line-height:16px;color:#000;transform:scaleX(1.0540);">ETaylor@serveur.com</span>
<span class="t" style="left:462.5px;top:271.5px;font-size:13px;line-height:16px;color:#000;transform:scaleX(1.0295);">07/01/2019</span>
<span class="t" style="left:534.5px;top:271.5px;font-size:13px;line-height:16px;color:#000;transform:scaleX(1.0118);">BIRMINGHAM</span>
<span class="t" style="left:627.5px;top:271.5px;font-size:13px;line-height:16px;color:#000;transform:scaleX(1.0692);">Art - Culture</span>
<span class="t" style="left:797.0px;top:271.5px;font-size:13px;line-height:16px;color:#000;transform:scaleX(0.9682);">3,440.00</span>
<span class="t" style="left:10.2px;top:291.5px;font-size:13px;line-height:16px;color:#3a3a3a;transform:scaleX(1.0367);">6</span>
<span class="t" style="left:28.5px;top:291.5px;font-size:13px;line-height:16px;color:#000;transform:scaleX(0.9188);">HARRIET</span>
<span class="t" style="left:120.5px;top:291.5px;font-size:13px;line-height:16px;color:#000;transform:scaleX(1.0607);">Patterson</span>
<span class="t" style="left:207.5px;top:291.5px;font-size:13px;line-height:16px;color:#000;transform:scaleX(0.8289);">F</span>
<div class="clip" style="left:257.5px;top:291.5px;width:155.5px;height:16px"><span class="t" style="left:0;top:0;font-size:13px;line-height:16px;color:#000;transform:scaleX(1.0583);">HPatterson@serveur.com</span></div>
<span class="t" style="left:462.5px;top:291.5px;font-size:13px;line-height:16px;color:#000;transform:scaleX(1.0295);">19/12/2020</span>
<span class="t" style="left:534.5px;top:291.5px;font-size:13px;line-height:16px;color:#000;transform:scaleX(1.0118);">BIRMINGHAM</span>
<span class="t" style="left:627.5px;top:291.5px;font-size:13px;line-height:16px;color:#000;transform:scaleX(1.0692);">Art - Culture</span>
<span class="t" style="left:797.0px;top:291.5px;font-size:13px;line-height:16px;color:#000;transform:scaleX(0.9682);">9,210.00</span>
<span class="t" style="left:10.2px;top:311.5px;font-size:13px;line-height:16px;color:#3a3a3a;transform:scaleX(1.0367);">7</span>
<span class="t" style="left:28.5px;top:311.5px;font-size:13px;line-height:16px;color:#000;transform:scaleX(0.9126);">HARRY</span>
<span class="t" style="left:120.5px;top:311.5px;font-size:13px;line-height:16px;color:#000;transform:scaleX(1.0096);">Rivera</span>
<span class="t" style="left:207.5px;top:311.5px;font-size:13px;line-height:16px;color:#000;transform:scaleX(1.1550);">M</span>
<span class="t" style="left:257.5px;top:311.5px;font-size:13px;line-height:16px;color:#000;transform:scaleX(1.0433);">HRivera@serveur.com</span>
<span class="t" style="left:462.5px;top:311.5px;font-size:13px;line-height:16px;color:#000;transform:scaleX(1.0451);">06/11/2018</span>
<span class="t" style="left:534.5px;top:311.5px;font-size:13px;line-height:16px;color:#000;transform:scaleX(1.0118);">BIRMINGHAM</span>
<span class="t" style="left:627.5px;top:311.5px;font-size:13px;line-height:16px;color:#000;transform:scaleX(1.0692);">Art - Culture</span>
<span class="t" style="left:797.0px;top:311.5px;font-size:13px;line-height:16px;color:#000;transform:scaleX(0.9682);">1,080.00</span>
<span class="t" style="left:10.2px;top:331.5px;font-size:13px;line-height:16px;color:#3a3a3a;transform:scaleX(1.0367);">8</span>
<span class="t" style="left:28.5px;top:331.5px;font-size:13px;line-height:16px;color:#000;transform:scaleX(0.9141);">PHOEBE</span>
<span class="t" style="left:120.5px;top:331.5px;font-size:13px;line-height:16px;color:#000;transform:scaleX(1.0171);">Collins</span>
<span class="t" style="left:207.5px;top:331.5px;font-size:13px;line-height:16px;color:#000;transform:scaleX(0.8289);">F</span>
<span class="t" style="left:257.5px;top:331.5px;font-size:13px;line-height:16px;color:#000;transform:scaleX(1.0386);">PCollins@serveur.com</span>
<span class="t" style="left:462.5px;top:331.5px;font-size:13px;line-height:16px;color:#000;transform:scaleX(1.0295);">28/05/2019</span>
<span class="t" style="left:534.5px;top:331.5px;font-size:13px;line-height:16px;color:#000;transform:scaleX(1.0118);">BIRMINGHAM</span>
<span class="t" style="left:627.5px;top:331.5px;font-size:13px;line-height:16px;color:#000;transform:scaleX(1.0692);">Art - Culture</span>
<span class="t" style="left:797.0px;top:331.5px;font-size:13px;line-height:16px;color:#000;transform:scaleX(0.9682);">8,200.00</span>
<span class="t" style="left:10.2px;top:351.5px;font-size:13px;line-height:16px;color:#3a3a3a;transform:scaleX(1.0367);">9</span>
<span class="t" style="left:28.5px;top:351.5px;font-size:13px;line-height:16px;color:#000;transform:scaleX(0.9007);">FINLEY</span>
<span class="t" style="left:120.5px;top:351.5px;font-size:13px;line-height:16px;color:#000;transform:scaleX(1.0659);">Wilson</span>
<span class="t" style="left:207.5px;top:351.5px;font-size:13px;line-height:16px;color:#000;transform:scaleX(1.1550);">M</span>
<span class="t" style="left:257.5px;top:351.5px;font-size:13px;line-height:16px;color:#000;transform:scaleX(1.0524);">FWilson@serveur.com</span>
<span class="t" style="left:462.5px;top:351.5px;font-size:13px;line-height:16px;color:#000;transform:scaleX(1.0295);">17/01/2018</span>
<span class="t" style="left:534.5px;top:351.5px;font-size:13px;line-height:16px;color:#000;transform:scaleX(1.0118);">BIRMINGHAM</span>
<span class="t" style="left:627.5px;top:351.5px;font-size:13px;line-height:16px;color:#000;transform:scaleX(1.0692);">Art - Culture</span>
<span class="t" style="left:797.0px;top:351.5px;font-size:13px;line-height:16px;color:#000;transform:scaleX(0.9682);">3,870.00</span>
<span class="t" style="left:6.8px;top:371.5px;font-size:13px;line-height:16px;color:#217346;transform:scaleX(1.0022);">10</span>
<span class="t" style="left:28.5px;top:371.5px;font-size:13px;line-height:16px;color:#000;transform:scaleX(0.9525);">JASMINE</span>
<span class="t" style="left:120.5px;top:371.5px;font-size:13px;line-height:16px;color:#000;transform:scaleX(1.0293);">Green</span>
<span class="t" style="left:207.5px;top:371.5px;font-size:13px;line-height:16px;color:#000;transform:scaleX(0.8289);">F</span>
<span class="t" style="left:257.5px;top:371.5px;font-size:13px;line-height:16px;color:#000;transform:scaleX(1.0370);">JGreen@serveur.com</span>
<span class="t" style="left:462.5px;top:371.5px;font-size:13px;line-height:16px;color:#000;transform:scaleX(1.0295);">20/10/2020</span>
<span class="t" style="left:534.5px;top:371.5px;font-size:13px;line-height:16px;color:#000;transform:scaleX(1.0118);">BIRMINGHAM</span>
<span class="t" style="left:627.5px;top:371.5px;font-size:13px;line-height:16px;color:#000;transform:scaleX(1.0692);">Art - Culture</span>
<span class="t" style="left:808.0px;top:371.5px;font-size:13px;line-height:16px;color:#000;transform:scaleX(0.9556);">460.00</span>
<span class="t" style="left:6.8px;top:391.5px;font-size:13px;line-height:16px;color:#3a3a3a;transform:scaleX(1.0741);">11</span>
<span class="t" style="left:28.5px;top:391.5px;font-size:13px;line-height:16px;color:#000;transform:scaleX(1.0449);">MUHAMMAD</span>
<span class="t" style="left:120.5px;top:391.5px;font-size:13px;line-height:16px;color:#000;transform:scaleX(1.0841);">Bennett</span>
<span class="t" style="left:207.5px;top:391.5px;font-size:13px;line-height:16px;color:#000;transform:scaleX(1.1550);">M</span>
<span class="t" style="left:257.5px;top:391.5px;font-size:13px;line-height:16px;color:#000;transform:scaleX(1.0795);">MBennett@serveur.com</span>
<span class="t" style="left:462.5px;top:391.5px;font-size:13px;line-height:16px;color:#000;transform:scaleX(1.0295);">13/12/2019</span>
<span class="t" style="left:534.5px;top:391.5px;font-size:13px;line-height:16px;color:#000;transform:scaleX(1.0118);">BIRMINGHAM</span>
<span class="t" style="left:627.5px;top:391.5px;font-size:13px;line-height:16px;color:#000;transform:scaleX(1.0692);">Art - Culture</span>
<span class="t" style="left:808.0px;top:391.5px;font-size:13px;line-height:16px;color:#000;transform:scaleX(0.9556);">280.00</span>
<span class="t" style="left:6.8px;top:411.5px;font-size:13px;line-height:16px;color:#3a3a3a;transform:scaleX(1.0022);">12</span>
<span class="t" style="left:28.5px;top:411.5px;font-size:13px;line-height:16px;color:#000;transform:scaleX(0.9154);">ARCHIE</span>
<span class="t" style="left:120.5px;top:411.5px;font-size:13px;line-height:16px;color:#000;transform:scaleX(0.9941);">King</span>
<span class="t" style="left:207.5px;top:411.5px;font-size:13px;line-height:16px;color:#000;transform:scaleX(1.1550);">M</span>
<span class="t" style="left:257.5px;top:411.5px;font-size:13px;line-height:16px;color:#000;transform:scaleX(1.0438);">AKing@serveur.com</span>
<span class="t" style="left:462.5px;top:411.5px;font-size:13px;line-height:16px;color:#000;transform:scaleX(1.0295);">14/12/2018</span>
<span class="t" style="left:534.5px;top:411.5px;font-size:13px;line-height:16px;color:#000;transform:scaleX(1.0118);">BIRMINGHAM</span>
<span class="t" style="left:627.5px;top:411.5px;font-size:13px;line-height:16px;color:#000;transform:scaleX(1.0692);">Art - Culture</span>
<span class="t" style="left:797.0px;top:411.5px;font-size:13px;line-height:16px;color:#000;transform:scaleX(0.9682);">7,840.00</span>
<div class="abs" id="leftedge"></div>
</div>
</body>
</html>
